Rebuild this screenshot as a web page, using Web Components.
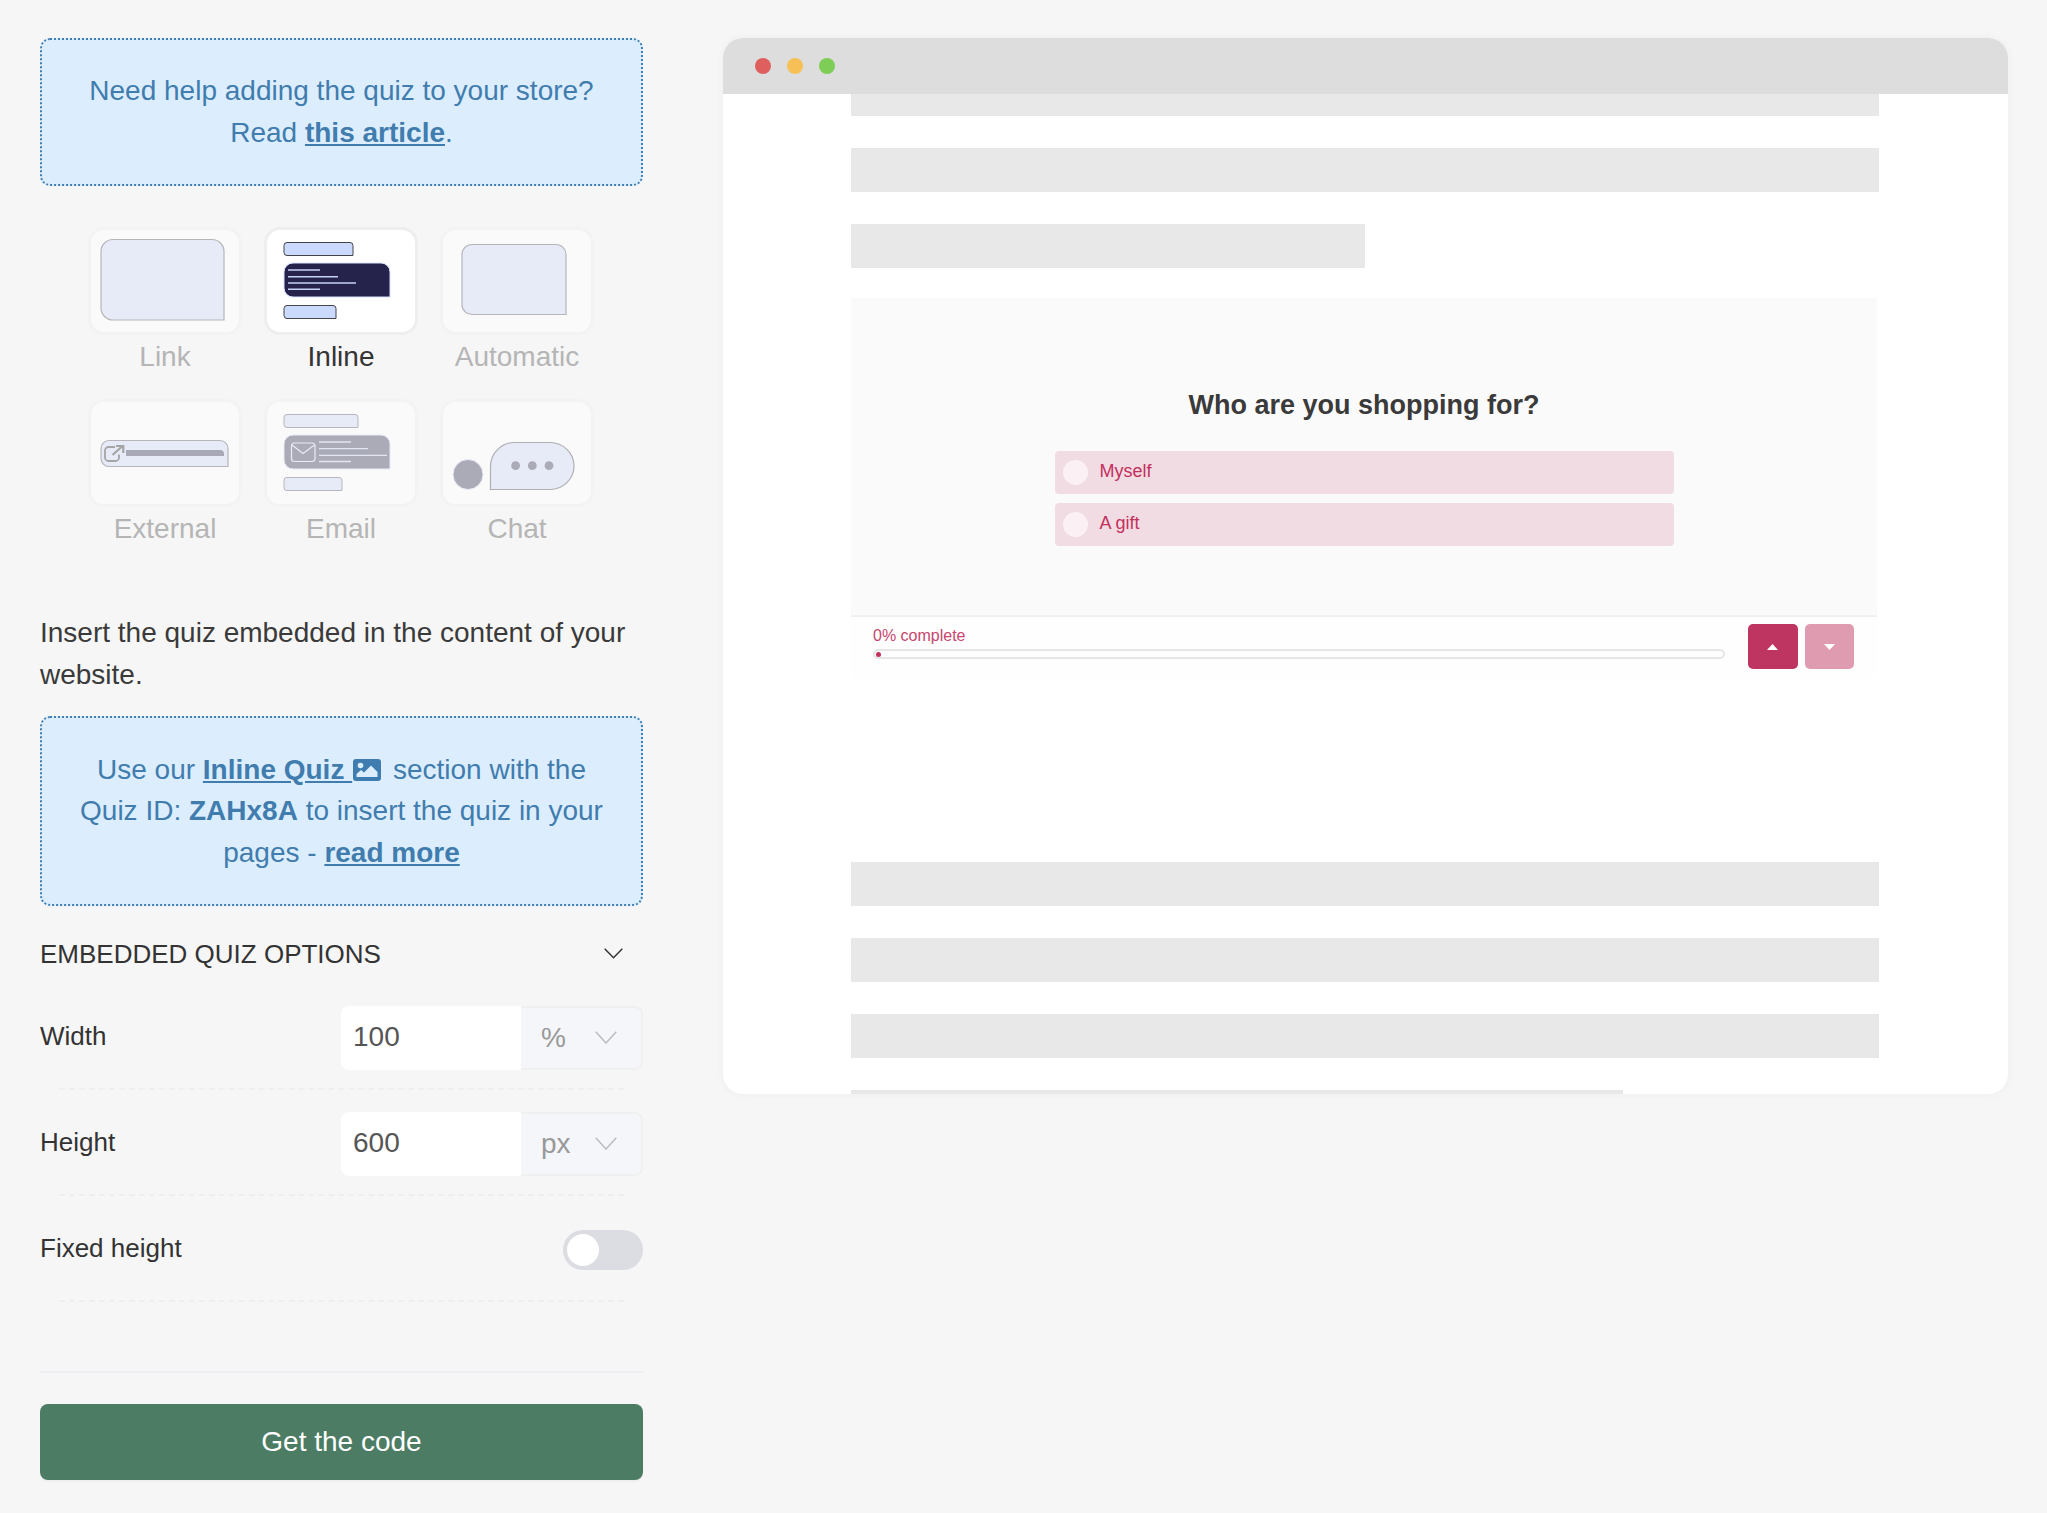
<!DOCTYPE html>
<html>
<head>
<meta charset="utf-8">
<title>Quiz embed</title>
<style>
  html, body { margin: 0; padding: 0; background: #f6f6f6; }
  body { font-family: "Liberation Sans", Arial, sans-serif; font-size: 28px; line-height: 41.600px; color: #3a3a3a; }
  a { color: inherit; font-weight: 700; }
</style>
</head>
<body>

<embed-page>
  <embed-sidebar>
    <info-box>Need help adding the quiz to your store? Read <a href="#">this article</a>.</info-box>

    <mode-grid>
      <mode-card label="Link">
        <svg viewBox="0 0 148 102" width="148" height="102"><path d="M22 9.500h99a12 12 0 0 1 12 12v68.500H22a12 12 0 0 1-12-12v-56.500a12 12 0 0 1 12-12z" fill="#e7ebf7" stroke="#b6b6b9" stroke-width="1.200"/></svg>
      </mode-card>
      <mode-card label="Inline" active>
        <svg viewBox="0 0 148 102" width="148" height="102">
          <path d="M20 12.500h63a3 3 0 0 1 3 3v10H20a3 3 0 0 1-3-3v-7a3 3 0 0 1 3-3z" fill="#cbdafc" stroke="#444" stroke-width="1"/>
          <path d="M26 33h88a9 9 0 0 1 9 9v25H26a9 9 0 0 1-9-9v-16a9 9 0 0 1 9-9z" fill="#25234b" stroke="#d8e2fb" stroke-width="1"/>
          <path d="M21 40h32M21 46.700h50M21 53h68M21 59.300h32" stroke="#c6d3f3" stroke-width="1.400" fill="none"/>
          <path d="M20 75.500h46a3 3 0 0 1 3 3v10H20a3 3 0 0 1-3-3v-7a3 3 0 0 1 3-3z" fill="#cbdafc" stroke="#444" stroke-width="1"/>
        </svg>
      </mode-card>
      <mode-card label="Automatic">
        <svg viewBox="0 0 148 102" width="148" height="102"><path d="M29 14.500h84a10 10 0 0 1 10 10v60H29a10 10 0 0 1-10-10v-50a10 10 0 0 1 10-10z" fill="#e7ebf7" stroke="#b6b6b9" stroke-width="1.200"/></svg>
      </mode-card>
      <mode-card label="External">
        <svg viewBox="0 0 148 102" width="148" height="102">
          <path d="M18 38.500h111a8 8 0 0 1 8 8v18H18a8 8 0 0 1-8-8v-10a8 8 0 0 1 8-8z" fill="#e7ebf7" stroke="#b6b6b9" stroke-width="1.200"/>
          <path d="M35 48h94a4 4 0 0 1 4 4v2H35z" fill="#a9a8b6"/>
          <path d="M24 45h-6.500a3.500 3.500 0 0 0-3.500 3.500v7a3.500 3.500 0 0 0 3.500 3.500h7a3.500 3.500 0 0 0 3.500-3.500v-3" fill="none" stroke="#a5a5a5" stroke-width="1.800"/>
          <path d="M21.500 53L31 44.500M25 44h7.300v7" fill="none" stroke="#a5a5a5" stroke-width="2.200"/>
        </svg>
      </mode-card>
      <mode-card label="Email">
        <svg viewBox="0 0 148 102" width="148" height="102">
          <path d="M20 12.500h68a3 3 0 0 1 3 3v10H20a3 3 0 0 1-3-3v-7a3 3 0 0 1 3-3z" fill="#e7ebf7" stroke="#b6b6bc" stroke-width="1"/>
          <path d="M26 33h88a9 9 0 0 1 9 9v25H26a9 9 0 0 1-9-9v-16a9 9 0 0 1 9-9z" fill="#ababb8" stroke="#e6eaf7" stroke-width="1"/>
          <rect x="24.500" y="41" width="23.500" height="18.500" rx="3" fill="none" stroke="#e8ebf7" stroke-width="1.200"/>
          <path d="M25 43l11 8.500L47.500 43" fill="none" stroke="#e8ebf7" stroke-width="1.200"/>
          <path d="M52 40h32M52 46.700h49M52 53.300h68M52 59.500h32" stroke="#e2e5f1" stroke-width="1.300" fill="none"/>
          <path d="M20 75.500h52a3 3 0 0 1 3 3v10H20a3 3 0 0 1-3-3v-7a3 3 0 0 1 3-3z" fill="#e7ebf7" stroke="#b6b6bc" stroke-width="1"/>
        </svg>
      </mode-card>
      <mode-card label="Chat">
        <svg viewBox="0 0 148 102" width="148" height="102">
          <circle cx="25" cy="72.500" r="15" fill="#ababb8" stroke="#e8ebf7" stroke-width="1"/>
          <path d="M72 40.500h35a24 23.500 0 0 1 0 47H47.500V64.500a24 24 0 0 1 24.500-24z" fill="#e7ebf7" stroke="#b0b0b3" stroke-width="1.200"/>
          <circle cx="72.600" cy="63.700" r="4.400" fill="#ababb8"/>
          <circle cx="89.300" cy="63.700" r="4.400" fill="#ababb8"/>
          <circle cx="106" cy="63.700" r="4.400" fill="#ababb8"/>
        </svg>
      </mode-card>
    </mode-grid>

    <p style="margin:63px 0 21px">Insert the quiz embedded in the content of your website.</p>

    <info-box style="box-shadow:0 2px 0 #f3f3f8">Use our <a href="#">Inline Quiz </a><svg width="28" height="22" viewBox="0 0 28 22" style="vertical-align:-2px;margin:0 4px 0 1px"><rect width="28" height="22" rx="3" fill="#3f7cb0"/><circle cx="7.500" cy="6.500" r="2.800" fill="#dceefd"/><path d="M3.500 18v-3l4.500-4 3 2.500 7-7 6.500 6.500V18z" fill="#dceefd"/></svg> section with the Quiz ID: <b>ZAHx8A</b> to insert the quiz in your pages - <a href="#">read more</a></info-box>

    <options-header>EMBEDDED QUIZ OPTIONS</options-header>

    <option-row label="Width"><unit-input value="100" unit="%"></unit-input></option-row>
    <option-row label="Height"><unit-input value="600" unit="px"></unit-input></option-row>
    <option-row label="Fixed height"><toggle-switch></toggle-switch></option-row>

    <code-button>Get the code</code-button>
  </embed-sidebar>

  <browser-frame>
    <skel-bar style="height:22px"></skel-bar>
    <skel-bar></skel-bar>
    <skel-bar style="width:514px"></skel-bar>
    <quiz-preview question="Who are you shopping for?">
      <quiz-option>Myself</quiz-option>
      <quiz-option>A gift</quiz-option>
    </quiz-preview>
    <skel-bar></skel-bar>
    <skel-bar></skel-bar>
    <skel-bar></skel-bar>
    <skel-bar style="width:772px;height:4px"></skel-bar>
  </browser-frame>
</embed-page>

<script>
class EmbedPage extends HTMLElement {
  constructor() {
    super();
    this.attachShadow({ mode: "open" }).innerHTML = `
      <style>
        :host { display: flex; align-items: flex-start; gap: 80px; padding: 38px 39px 33px 40px; }
      </style>
      <slot></slot>`;
  }
}

class EmbedSidebar extends HTMLElement {
  constructor() {
    super();
    this.attachShadow({ mode: "open" }).innerHTML = `
      <style>
        :host { display: block; width: 603px; flex: none; }
      </style>
      <slot></slot>`;
  }
}

class InfoBox extends HTMLElement {
  constructor() {
    super();
    this.attachShadow({ mode: "open" }).innerHTML = `
      <style>
        :host {
          display: block;
          padding: 30.400px 30px;
          border: 2px dotted #3f7fb5;
          border-radius: 10px;
          background: #dceefd;
          color: #417cae;
          text-align: center;
        }
      </style>
      <slot></slot>`;
  }
}

class ModeGrid extends HTMLElement {
  constructor() {
    super();
    this.attachShadow({ mode: "open" }).innerHTML = `
      <style>
        :host { display: grid; grid-template-columns: repeat(3, 154px); gap: 22px; padding-left: 48px; margin-top: 41px; }
      </style>
      <slot></slot>`;
  }
}

class ModeCard extends HTMLElement {
  constructor() {
    super();
    const label = this.getAttribute("label");
    this.attachShadow({ mode: "open" }).innerHTML = `
      <style>
        :host { display: block; text-align: center; color: #b5b5b5; }
        :host([active]) { color: #333; }
        .box {
          height: 102px;
          border: 3px solid #f3f3f3;
          border-radius: 16px;
          background: #fafafa;
        }
        :host([active]) .box { background: #fff; border-color: #eee; }
        ::slotted(svg) { display: block; }
        .label { padding-top: 1px; line-height: 41px; font-size: 28px; }
      </style>
      <div class="box"><slot></slot></div>
      <div class="label">${label}</div>`;
  }
}

class OptionsHeader extends HTMLElement {
  constructor() {
    super();
    this.attachShadow({ mode: "open" }).innerHTML = `
      <style>
        :host { display: flex; justify-content: space-between; align-items: center; margin: 27px 0 31px; height: 42px; font-size: 26px; color: #333; }
        span { margin-top: 2px; }
        svg { margin-right: 20px; }
      </style>
      <span><slot></slot></span>
      <svg width="19" height="11" viewBox="0 0 19 11"><path d="M.7.7l8.800 9 8.800-9" fill="none" stroke="#333" stroke-width="1.500"/></svg>`;
  }
}

class OptionRow extends HTMLElement {
  constructor() {
    super();
    const label = this.getAttribute("label");
    this.attachShadow({ mode: "open" }).innerHTML = `
      <style>
        :host { display: block; margin-bottom: 22px; }
        .row { display: flex; justify-content: space-between; align-items: center; height: 64px; }
        .label { margin-top: -2px; font-size: 26px; color: #333; }
        .dash { margin: 18px 19px 0; border-top: 2px dashed #efefef; }
      </style>
      <div class="row"><span class="label">${label}</span><slot></slot></div>
      <div class="dash"></div>`;
  }
}

class UnitInput extends HTMLElement {
  constructor() {
    super();
    const value = this.getAttribute("value");
    const unit = this.getAttribute("unit");
    this.attachShadow({ mode: "open" }).innerHTML = `
      <style>
        :host { display: flex; width: 302px; height: 64px; line-height: 62px; }
        .num { width: 168px; padding-left: 12px; background: #fff; border-radius: 8px 0 0 8px; color: #555; }
        .unit {
          flex: 1;
          display: flex;
          justify-content: space-between;
          align-items: center;
          padding: 0 24px 0 20px;
          background: #f5f6fa;
          border: 2px solid #f0f0f0;
          border-left: 0;
          border-radius: 0 8px 8px 0;
          color: #999;
        }
      </style>
      <div class="num">${value}</div>
      <div class="unit"><span>${unit}</span>
        <svg width="22" height="13" viewBox="0 0 22 13"><path d="M.7.7L11 12 21.300.7" fill="none" stroke="#bcbcbc" stroke-width="1.500"/></svg>
      </div>`;
  }
}

class ToggleSwitch extends HTMLElement {
  constructor() {
    super();
    this.attachShadow({ mode: "open" }).innerHTML = `
      <style>
        :host { display: flex; align-items: center; width: 80px; height: 40px; padding-left: 4px; box-sizing: border-box; border-radius: 20px; background: #dcdde2; }
        .knob { width: 32px; height: 32px; border-radius: 50%; background: #fff; }
      </style>
      <div class="knob"></div>`;
  }
}

class CodeButton extends HTMLElement {
  constructor() {
    super();
    this.attachShadow({ mode: "open" }).innerHTML = `
      <style>
        :host { display: block; margin-top: 69px; padding-top: 31px; border-top: 2px solid #f0f0f4; }
        .btn { height: 76px; line-height: 76px; border-radius: 8px; background: #4c7c63; color: #fff; text-align: center; font-size: 28px; box-shadow: 0 2px 0 #eee; }
      </style>
      <div class="btn"><slot></slot></div>`;
  }
}

class BrowserFrame extends HTMLElement {
  constructor() {
    super();
    this.attachShadow({ mode: "open" }).innerHTML = `
      <style>
        :host { display: block; width: 1285px; flex: none; border-radius: 20px; overflow: hidden; background: #fff; box-shadow: 0 0 10px rgba(0,0,0,.04); }
        .bar { display: flex; align-items: center; gap: 16px; height: 56px; padding-left: 32px; background: #ddd; }
        .bar i { width: 16px; height: 16px; border-radius: 50%; }
        .body { display: flex; flex-direction: column; gap: 32px; height: 1000px; padding: 0 129px 0 128px; overflow: hidden; }
      </style>
      <div class="bar"><i style="background:#df5f5f"></i><i style="background:#f6c056"></i><i style="background:#7ecd56"></i></div>
      <div class="body"><slot></slot></div>`;
  }
}

class SkelBar extends HTMLElement {
  constructor() {
    super();
    this.attachShadow({ mode: "open" }).innerHTML = `
      <style>
        :host { display: block; flex: none; height: 44px; background: #e8e8e8; }
      </style>`;
  }
}

class QuizPreview extends HTMLElement {
  constructor() {
    super();
    const question = this.getAttribute("question");
    this.attachShadow({ mode: "open" }).innerHTML = `
      <style>
        :host { display: block; flex: none; width: 1026px; height: 532px; margin-top: -2px; }
        .main { height: 226px; padding-top: 91px; background: #fafafa; }
        h2 { margin: 0 0 30px; font-size: 27px; line-height: 32px; font-weight: 700; text-align: center; color: #3a3a3a; }
        .opts { display: flex; flex-direction: column; gap: 9px; width: 619px; margin: 0 auto; }
        .foot { display: flex; gap: 23px; height: 61px; padding: 0 23px 0 22px; border-top: 2px solid #f1f1f1; background: #fefefe; }
        .prog { flex: 1; padding-top: 10px; font-size: 16px; line-height: 18px; color: #c7466e; }
        .track { height: 6px; margin-top: 4px; border: 2px solid #e6e6e6; border-radius: 5px; display: flex; align-items: center; padding-left: 1px; }
        .track i { width: 5px; height: 5px; border-radius: 50%; background: #c2305c; }
        .btns { display: flex; gap: 7px; padding-top: 7px; }
        .btns span { display: flex; justify-content: center; align-items: center; width: 49.500px; height: 45px; border-radius: 5px; background: #bd3560; }
        .btns span + span { background: #df9cb0; }
      </style>
      <div class="main">
        <h2>${question}</h2>
        <div class="opts"><slot></slot></div>
      </div>
      <div class="foot">
        <div class="prog">0% complete<div class="track"><i></i></div></div>
        <div class="btns">
          <span><svg width="11" height="6" viewBox="0 0 11 6"><path d="M5.500 0L11 6H0z" fill="#fff"/></svg></span>
          <span><svg width="11" height="6" viewBox="0 0 11 6"><path d="M0 0h11L5.500 6z" fill="#fff"/></svg></span>
        </div>
      </div>`;
  }
}

class QuizOption extends HTMLElement {
  constructor() {
    super();
    this.attachShadow({ mode: "open" }).innerHTML = `
      <style>
        :host { display: flex; align-items: center; gap: 12px; height: 43px; padding-left: 8px; border-radius: 4px; background: #f2dce3; font-size: 18px; line-height: 20px; color: #c2305c; }
        i { width: 25px; height: 25px; border-radius: 50%; background: #fbf1f4; }
        span { margin-top: -4px; }
      </style>
      <i></i><span><slot></slot></span>`;
  }
}

customElements.define("embed-page", EmbedPage);
customElements.define("embed-sidebar", EmbedSidebar);
customElements.define("info-box", InfoBox);
customElements.define("mode-grid", ModeGrid);
customElements.define("mode-card", ModeCard);
customElements.define("options-header", OptionsHeader);
customElements.define("option-row", OptionRow);
customElements.define("unit-input", UnitInput);
customElements.define("toggle-switch", ToggleSwitch);
customElements.define("code-button", CodeButton);
customElements.define("browser-frame", BrowserFrame);
customElements.define("skel-bar", SkelBar);
customElements.define("quiz-preview", QuizPreview);
customElements.define("quiz-option", QuizOption);
</script>
</body>
</html>
